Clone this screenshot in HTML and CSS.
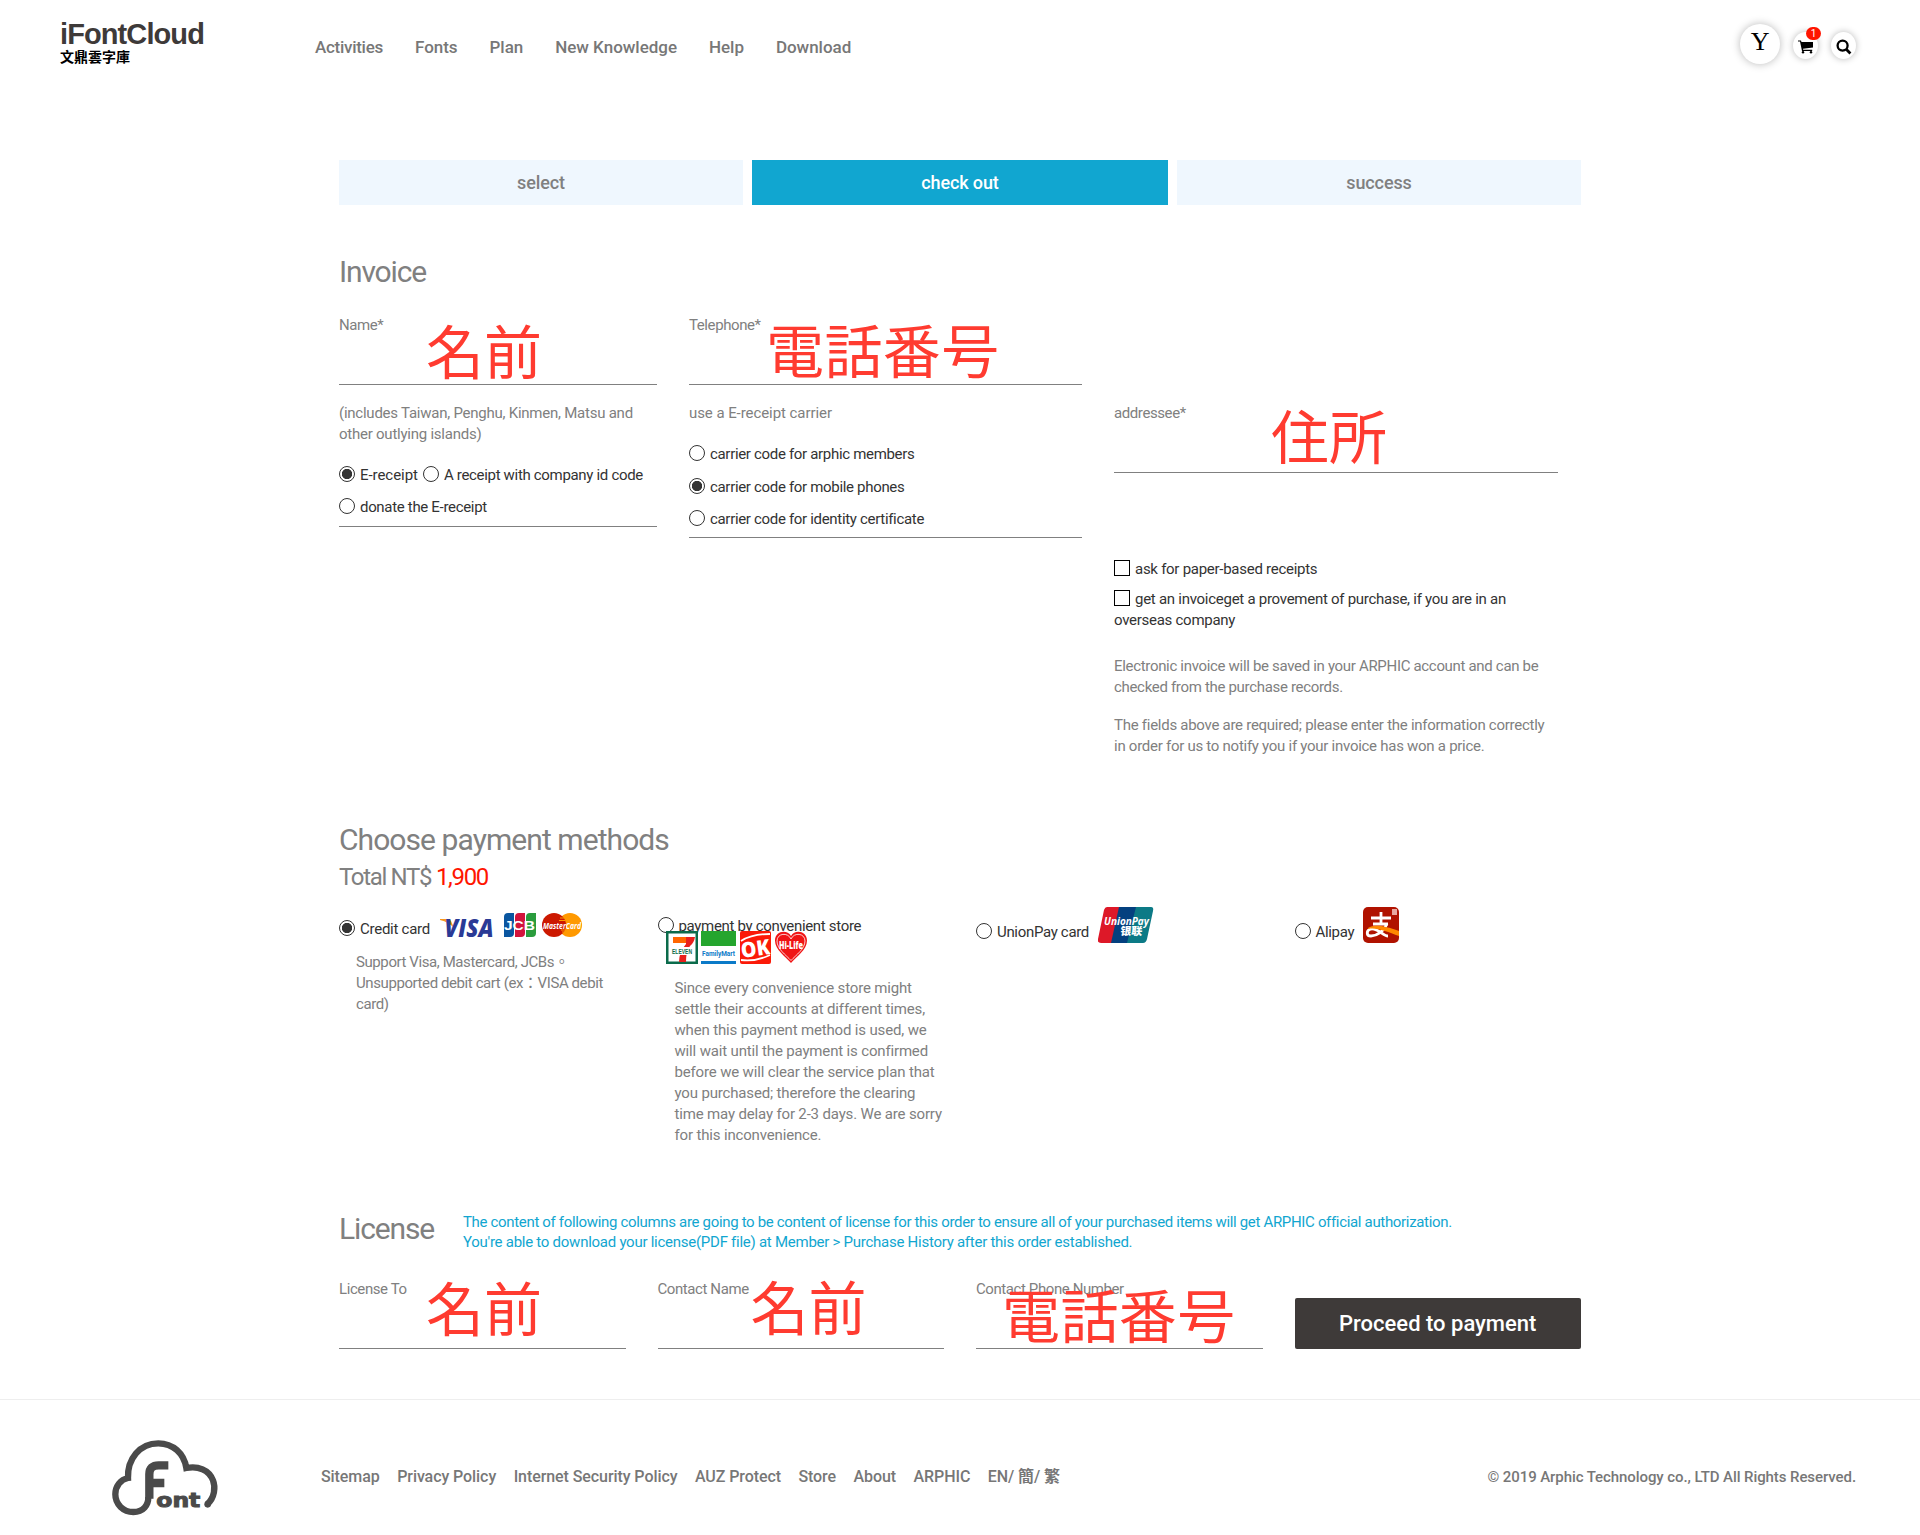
FILE: index.html
```html
<!DOCTYPE html>
<html lang="en">
<head>
<meta charset="utf-8">
<title>iFontCloud - Check out</title>
<link rel="stylesheet" href="styles.css">
</head>
<body>
<header class="header">
  <a class="brand"><span class="brand-name">iFontCloud</span><span class="brand-sub">文鼎雲字庫</span></a>
  <nav class="nav"><a class="tight">Activities</a><a>Fonts</a><a>Plan</a><a>New Knowledge</a><a>Help</a><a>Download</a></nav>
  <div class="tools">
    <a class="avatar">Y</a>
    <a class="tool"><svg width="16" height="14" viewBox="0 0 16 14"><path d="M0 .4h3l.5 1.500H15v5.600L5 8.800l.2 1h9v1.200H4L2 1.600H0z"/><circle cx="5" cy="12.300" r="1.200"/><circle cx="13" cy="12.300" r="1.200"/></svg><span class="badge">1</span></a>
    <a class="tool"><svg width="16" height="16" viewBox="0 0 16 16"><circle cx="6.600" cy="6.600" r="5" fill="none" stroke="#000" stroke-width="2.300"/><path d="M10.500 10.500l3.900 3.900" stroke="#000" stroke-width="2.800"/></svg></a>
  </div>
</header>
<main class="main">
  <ol class="steps"><li class="step">select</li><li class="step step-on">check out</li><li class="step">success</li></ol>

  <h2 class="title invoice-title">Invoice</h2>
  <section class="invoice">
    <div class="field"><label>Name*</label><span class="note note-name">名前</span></div>
    <div class="field"><label>Telephone*</label><span class="note note-tel">電話番号</span></div>
    <div></div>
    <div class="group group-receipt">
      <p>(includes Taiwan, Penghu, Kinmen, Matsu and<br>other outlying islands)</p>
      <div class="options">
        <label class="choice loose"><i class="radio on"></i><span>E-receipt</span></label>
        <label class="choice"><i class="radio"></i><span>A receipt with company id code</span></label>
        <label class="choice"><i class="radio"></i><span>donate the E-receipt</span></label>
      </div>
    </div>
    <div class="group group-carrier">
      <p>use a E-receipt carrier</p>
      <div class="options options-stack">
        <label class="choice"><i class="radio"></i><span>carrier code for arphic members</span></label>
        <label class="choice"><i class="radio on"></i><span>carrier code for mobile phones</span></label>
        <label class="choice"><i class="radio"></i><span>carrier code for identity certificate</span></label>
      </div>
    </div>
    <div class="extra">
      <div class="field"><label>addressee*</label><span class="note note-addr">住所</span></div>
      <label class="check check-first"><i class="box"></i>ask for paper-based receipts</label>
      <label class="check"><i class="box"></i>get an invoiceget a provement of purchase, if you are in an<br>overseas company</label>
      <p class="hint">Electronic invoice will be saved in your ARPHIC account and can be<br>checked from the purchase records.</p>
      <p class="hint">The fields above are required; please enter the information correctly<br>in order for us to notify you if your invoice has won a price.</p>
    </div>
  </section>

  <h2 class="title pay-title">Choose payment methods</h2>
  <p class="total">Total NT$ <b>1,900</b></p>
  <section class="methods">
    <div class="method credit">
      <div class="head">
        <label class="choice"><i class="radio on"></i><span>Credit card</span></label>
        <span class="logos">
          <svg width="58" height="18" viewBox="0 0 58 18"><path d="M0 0h8q2 0 3 2l3 7Q9 3 0 1z" fill="#f7981d"/><text x="4.500" y="17.600" font-family="Open Sans" font-weight="800" font-style="italic" font-size="24" letter-spacing="0" fill="#2a3a95" textLength="49" lengthAdjust="spacingAndGlyphs">VISA</text></svg>
          <svg width="32" height="24" viewBox="0 0 32 24"><path d="M4 0h6v20q0 4-4 4H0V4q0-4 4-4z" fill="#0a56a0"/><path d="M15 0h6v20q0 4-4 4h-6V4q0-4 4-4z" fill="#d3143c"/><path d="M26 0h6v20q0 4-4 4h-6V4q0-4 4-4z" fill="#2a9c3d"/><text x="0" y="16.500" font-family="Liberation Sans" font-weight="700" font-size="12" fill="#fff" textLength="31" lengthAdjust="spacingAndGlyphs">JCB</text></svg>
          <svg width="40" height="24" viewBox="0 0 40 24"><circle cx="28" cy="12" r="12" fill="#f90"/><circle cx="12" cy="12" r="12" fill="#cc1800"/><path d="M18 5h5M17 7.500h6M19 17h4M20 19h2" stroke="#f90" stroke-width="1"/><text x="1" y="15.500" font-family="Open Sans" font-weight="700" font-style="italic" font-size="8.500" fill="#fff" textLength="38" lengthAdjust="spacingAndGlyphs">MasterCard</text></svg>
        </span>
      </div>
      <p class="desc">Support Visa, Mastercard, JCBs。<br>Unsupported debit cart (ex：VISA debit<br>card)</p>
    </div>
    <div class="method store">
      <label class="choice"><i class="radio"></i><span>payment by convenient store</span></label>
      <span class="logos">
        <svg width="32" height="33" viewBox="0 0 32 33"><path fill="#0b6b4b" d="M0 0h32v33H0z"/><path fill="#fff" d="M2.500 2.500h27v28h-27z"/><path d="M7 6h17v6H7z" fill="#f60"/><path d="M20 6h9q-1 6-5 9-4 5-4 16h-7q0-10 7-18z" fill="#e8201c"/><path fill="#fff" d="M5 16h22v8H5z"/><text x="6" y="23.300" font-family="Liberation Sans" font-weight="700" font-size="8" fill="#0b6b4b" textLength="20" lengthAdjust="spacingAndGlyphs">ELEVEN</text></svg>
        <svg width="35" height="33" viewBox="0 0 35 33"><path fill="#fff" d="M0 0h35v33H0z"/><path fill="#25a52e" d="M0 0h35v15H0z"/><path fill="#0b7ac8" d="M0 30h35v3H0z"/><text x="1" y="25" font-family="Roboto" font-weight="700" font-size="7.500" fill="#0b7ac8" textLength="33" lengthAdjust="spacingAndGlyphs">FamilyMart</text></svg>
        <svg width="31" height="33" viewBox="0 0 31 33"><rect width="31" height="33" rx="2" fill="#fb1a08"/><path d="M1 10Q12 3 30 3M1 29q14 2 29-5" fill="none" stroke="#fff" stroke-width="1.800"/><text transform="rotate(-8 15 18)" x="1" y="25" font-family="Open Sans" font-weight="800" font-size="21" fill="#fff" textLength="29" lengthAdjust="spacingAndGlyphs">OK</text></svg>
        <svg width="34" height="33" viewBox="0 0 34 33"><path d="M17 32C12 26 1 19 1 9.500 1 0 13-2 17 5c4-7 16-5 16 4.500C33 19 22 26 17 32z" fill="#f01414"/><path d="M17 29.500C12 24 3 18 3 10c0-8 11-9 14-2 3-7 14-6 14 2 0 8-9 14-14 19.500z" fill="none" stroke="#fff" stroke-width=".8"/><text x="5" y="18" font-family="Open Sans" font-weight="800" font-size="11" fill="#fff" textLength="24" lengthAdjust="spacingAndGlyphs">Hi-Life</text></svg>
      </span>
      <p class="desc">Since every convenience store might<br>settle their accounts at different times,<br>when this payment method is used, we<br>will wait until the payment is confirmed<br>before we will clear the service plan that<br>you purchased; therefore the clearing<br>time may delay for 2-3 days. We are sorry<br>for this inconvenience.</p>
    </div>
    <div class="method big">
      <div class="head">
        <label class="choice"><i class="radio"></i><span>UnionPay card</span></label>
        <span class="logos"><svg width="56" height="36" viewBox="0 0 56 36"><path d="M9 0h15l-9 36H3q-4 0-3-4L6 3q1-3 3-3z" fill="#dd1828"/><path d="M21 0h20l-8 36H13z" fill="#04407f"/><path d="M38 0h15q3 0 2 4l-6 28q-1 4-4 4H29z" fill="#0c7a86"/><text x="6" y="18" font-family="Open Sans" font-weight="700" font-style="italic" font-size="11" fill="#fff" textLength="45" lengthAdjust="spacingAndGlyphs">UnionPay</text><text x="22" y="28.500" font-family="Noto Sans CJK SC" font-weight="900" font-size="11" fill="#fff" transform="skewX(-5) translate(2.500 0)">银联</text></svg></span>
      </div>
    </div>
    <div class="method big">
      <div class="head">
        <label class="choice"><i class="radio"></i><span>Alipay</span></label>
        <span class="logos"><svg width="36" height="36" viewBox="0 0 36 36"><rect width="36" height="36" rx="5" fill="#b01200"/><path d="M29 2h5v6h-5z" fill="#e8a8a0"/><path d="M8 11h20M18 5v11M10 17h15M24 17C21 24 14 29 8 29c-5 0-5-6 0-7 7-1 12 7 17 7" fill="none" stroke="#fff" stroke-width="2.800"/><path d="M5 21C12 17 21 19 36 24v5C24 25 14 20 5 22z" fill="#f80"/></svg></span>
      </div>
    </div>
  </section>

  <div class="license-head">
    <h2 class="title license-title">License</h2>
    <p class="license-note">The content of following columns are going to be content of license for this order to ensure all of your purchased items will get ARPHIC official authorization.<br><span class="line-loose">You're able to download your license(PDF file) at Member &gt; Purchase History after this order established.</span></p>
  </div>
  <section class="license">
    <div class="field"><label>License To</label><span class="note note-l1">名前</span></div>
    <div class="field"><label>Contact Name</label><span class="note note-l2">名前</span></div>
    <div class="field"><label>Contact Phone Number</label><span class="note note-l3">電話番号</span></div>
    <button class="pay">Proceed to payment</button>
  </section>
</main>
<footer class="footer">
  <svg class="cloud" width="107" height="76" viewBox="36 29 321 228" fill="none" stroke="#4a4a4a"><path d="M322 221C344 202 347 170 339 150 327 118 294 106 259 113 252 69 219 39 175 39 119 39 82 86 84 143 62 147 46 168 46 192 46 222 70 245 100 245 130 245 145 225 145 200" stroke-width="19"/><circle cx="323" cy="222" r="10" fill="#4a4a4a" stroke="none"/><path d="M148 205V132Q148 105 176 105H205M148 158H193" stroke-width="25"/><text x="169" y="230" font-family="DejaVu Sans" font-weight="700" font-size="60" fill="#4a4a4a" stroke="#4a4a4a" stroke-width="3" textLength="132" lengthAdjust="spacingAndGlyphs">ont</text></svg>
  <nav class="links"><a>Sitemap</a><a>Privacy Policy</a><a>Internet Security Policy</a><a>AUZ Protect</a><a>Store</a><a>About</a><a>ARPHIC</a><a>EN/ <b>簡</b>/ <b>繁</b></a></nav>
  <p class="copy">© 2019 Arphic Technology co., LTD All Rights Reserved.</p>
</footer>
</body>
</html>
```
FILE: styles.css
```css
* { box-sizing: border-box; }
body, h2, p, ol { margin: 0; padding: 0; }
body { background: #fff; color: #808080; font: 15px/21px Roboto, "Noto Sans CJK TC", sans-serif; letter-spacing: -.27px; width: 1920px; height: 1535px; }
svg { letter-spacing: 0; }

.header { display: flex; height: 160px; padding: 0 64px 0 60px; }
.brand { display: flex; flex-direction: column; width: 255px; padding-top: 19px; color: #3e3a39; }
.brand-name { font: 700 29px/30px "Liberation Sans", sans-serif; letter-spacing: -.9px; }
.brand-sub { font: 700 14px/14px "Noto Sans CJK TC", sans-serif; letter-spacing: 0; color: #000; }
.nav { display: flex; gap: 32px; padding-top: 36px; font-size: 17px; font-weight: 500; line-height: 22px; letter-spacing: -.03px; color: #777; }
.nav .tight { letter-spacing: -.28px; }
.tools { display: flex; margin-left: auto; padding-top: 24px; gap: 13px; color: #000; }
.avatar { width: 40px; height: 40px; border-radius: 50%; box-shadow: 0 0 9px rgba(0,0,0,.28); font: 26px/36px "Liberation Serif", serif; text-align: center; }
.tool { position: relative; display: flex; align-items: center; justify-content: center; width: 25px; height: 27px; margin-top: 8px; border-radius: 50%; box-shadow: 0 0 7px rgba(0,0,0,.28); padding-top: 3px; }
.badge { position: absolute; left: 13px; top: -5px; width: 15px; height: 13px; border-radius: 7px; background: #ff1500; color: #fff; font-size: 10px; line-height: 13px; text-align: center; }

.main { width: 1242px; margin-left: 339px; height: 1239px; }
.steps { display: grid; grid-template-columns: 404px 416px 404px; gap: 9px; list-style: none; }
.step { height: 45px; background: #eff7fe; font-size: 18px; line-height: 45px; font-weight: 500; letter-spacing: -.12px; text-align: center; color: #808080; }
.step-on { background: #11a6d0; color: #fff; }

.title { font-size: 30px; line-height: 40px; font-weight: 400; letter-spacing: -1.15px; color: #808080; }
.invoice-title { margin: 47px 0 23px; }
.pay-title { letter-spacing: -.93px; }
.invoice { display: grid; grid-template-columns: 318px 393px 444px; column-gap: 32px; row-gap: 18px; height: 505px; grid-template-rows: 70px 1fr; align-items: start; }
.field { position: relative; height: 70px; border-bottom: 1px solid #808080; }
.field label { display: block; letter-spacing: -.41px; }
.note { position: absolute; font: 58px/58px "Noto Sans CJK JP", sans-serif; letter-spacing: 0; color: #ff3b30; white-space: nowrap; }
.note-name { left: 87px; top: 5px; }
.note-tel { left: 77px; top: 4px; letter-spacing: .4px; }
.note-addr { left: 157px; top: 2px; }
.note-l1 { left: 87px; top: -1px; }
.note-l2 { left: 93px; top: -2px; }
.note-l3 { left: 26px; top: 6px; letter-spacing: .4px; }

.group { border-bottom: 1px solid #808080; }
.group-receipt { height: 124px; }
.group-receipt p { letter-spacing: -.24px; }
.group-carrier { height: 135px; }
.group-carrier p { letter-spacing: -.07px; }
.options { display: flex; flex-wrap: wrap; column-gap: 5px; padding-top: 19px; row-gap: 11px; }
.options-stack { flex-direction: column; row-gap: 11.500px; }
.choice { display: flex; gap: 5px; color: #333; white-space: nowrap; letter-spacing: -.32px; }
.choice.loose { letter-spacing: -.05px; }
.choice span { position: relative; top: 1px; }
.radio { flex: none; width: 16px; height: 16px; margin-top: 2px; border: 1px solid #333; border-radius: 50%; }
.radio.on { background: radial-gradient(circle, #333 4.800px, #fff 5.500px); }
.check { display: block; color: #333; margin-bottom: 9px; }
.check-first { margin-top: 86px; }
.box { display: inline-block; width: 16px; height: 16px; margin-right: 5px; border: 1px solid #000; vertical-align: -2px; }
.hint { margin-bottom: 17px; white-space: nowrap; }
.check + .hint { margin-top: 25px; letter-spacing: -.32px; }

.total { margin-top: 1px; font-size: 24px; line-height: 32px; letter-spacing: -1.32px; }
.total b { font-weight: 400; color: #ff1500; }
.methods { display: grid; grid-template-columns: repeat(4, minmax(0, 1fr)); column-gap: 32px; height: 316px; align-items: start; }
.head { display: flex; height: 59px; }
.logos { display: flex; }
.credit .choice { margin-top: 25px; letter-spacing: -.26px; }
.credit .logos { margin: 20px 0 0 10px; height: 24px; gap: 6px; align-items: flex-end; }
.store .choice { margin-top: 22px; }
.store .logos { position: relative; margin: -5px 0 14px 8px; gap: 3.500px; }
.big .choice { margin-top: 28px; }
.big .logos { margin: 14px 0 0 9px; }
.desc { padding-left: 17px; white-space: nowrap; letter-spacing: -.41px; }
.store .desc { letter-spacing: -.16px; }

.license-head { display: flex; height: 69px; gap: 29px; }
.license-note { padding-top: 3px; line-height: 20px; letter-spacing: -.33px; color: #11a6d0; white-space: nowrap; }
.line-loose { letter-spacing: -.26px; }
.license { display: grid; grid-template-columns: repeat(4, minmax(0, 1fr)); column-gap: 32px; align-items: end; }
.license .field { height: 71px; }
.license label { padding-top: 1px; }
.pay { height: 51px; border: 0; border-radius: 2px; background: #3e3a39; color: #fff; font: 500 22px/51px Roboto, sans-serif; padding: 0; }

.footer { display: flex; height: 136px; border-top: 1px solid #eee; padding-right: 64px; font-weight: 500; letter-spacing: -.08px; color: #777; }
.cloud { margin: 40px 0 0 112px; }
.links { display: flex; gap: 17.500px; margin-left: 102px; padding-top: 66px; font-size: 16px; }
.copy { margin-left: auto; padding-top: 67px; }
```
